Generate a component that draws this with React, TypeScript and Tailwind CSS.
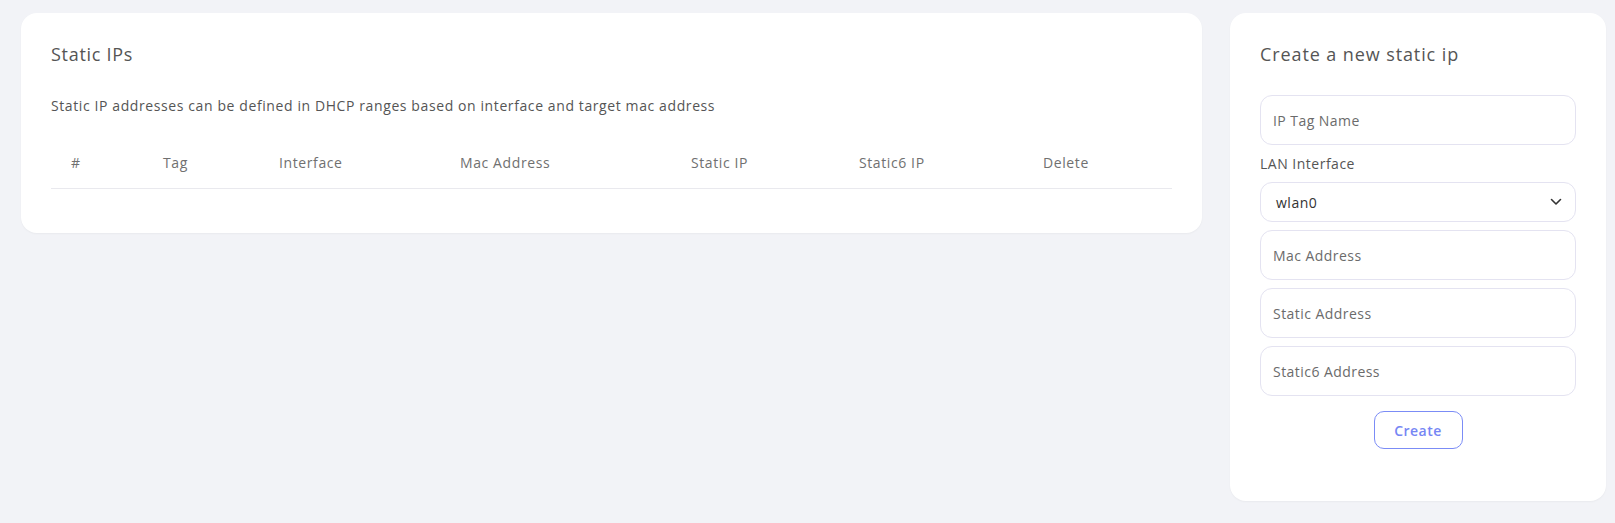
import React from "react";

const font = { fontFamily: '"Open Sans", "Liberation Sans", sans-serif' };

function Field({ placeholder }: { placeholder: string }) {
  return (
    <input
      placeholder={placeholder}
      className="h-[50px] w-full rounded-[12px] border border-[#e4e3f1] bg-white px-[12px] text-[14px] tracking-[0.45px] text-[#333] placeholder:text-[#6b6b6b] outline-none"
    />
  );
}

export default function App() {
  const headers = ["#", "Tag", "Interface", "Mac Address", "Static IP", "Static6 IP", "Delete"];
  return (
    <div
      style={font}
      className="min-h-[523px] bg-[#f2f3f7] flex items-start gap-[28px] pl-[21px] pr-[9px] pt-[13px]"
    >
      <div className="flex-1 bg-white rounded-[16px] px-[30px] pt-[30px] pb-[44px] shadow-[0_1px_2px_rgba(0,0,0,0.04)]">
        <h2 className="text-[18px] leading-[22px] font-medium tracking-[0.7px] text-[#555]">Static IPs</h2>
        <p className="mt-[30px] text-[14px] leading-[21px] tracking-[0.6px] text-[#555]">
          Static IP addresses can be defined in DHCP ranges based on interface and target mac address
        </p>
        <div className="mt-[21px] grid grid-cols-[92px_116px_181px_231px_168px_184px_1fr] border-b border-[#e9e9ee]">
          {headers.map((h) => (
            <div key={h} className="px-[20px] py-[15px] text-[14px] leading-[21px] tracking-[0.6px] text-[#707070]">
              {h}
            </div>
          ))}
        </div>
      </div>

      <div className="w-[376px] bg-white rounded-[16px] px-[30px] pt-[30px] pb-[52px] shadow-[0_1px_2px_rgba(0,0,0,0.04)]">
        <h2 className="text-[18px] leading-[22px] font-medium tracking-[0.9px] text-[#555]">Create a new static ip</h2>
        <div className="mt-[30px] flex flex-col">
          <Field placeholder="IP Tag Name" />
          <label className="mt-[8px] mb-[8px] text-[14px] leading-[21px] tracking-[0.5px] text-[#555]">LAN Interface</label>
          <div className="relative h-[40px] w-full rounded-[12px] border border-[#e4e3f1] bg-white flex items-center pl-[15px] pr-[12px]">
            <span className="flex-1 text-[14px] tracking-[0.5px] text-[#333]">wlan0</span>
            <svg width="12" height="8" viewBox="0 0 12 8" fill="none" className="mr-[1px]">
              <polyline points="1.5,1.5 6,6 10.5,1.5" stroke="#333" strokeWidth="1.6" strokeLinecap="round" strokeLinejoin="round" />
            </svg>
          </div>
          <div className="mt-[8px] flex flex-col gap-[8px]">
            <Field placeholder="Mac Address" />
            <Field placeholder="Static Address" />
            <Field placeholder="Static6 Address" />
          </div>
          <div className="mt-[15px] flex justify-center">
            <button className="h-[38px] w-[89px] rounded-[10px] border border-[#7b8cf6] bg-white text-[14px] font-semibold tracking-[0.5px] text-[#7686f4]">
              Create
            </button>
          </div>
        </div>
      </div>
    </div>
  );
}
